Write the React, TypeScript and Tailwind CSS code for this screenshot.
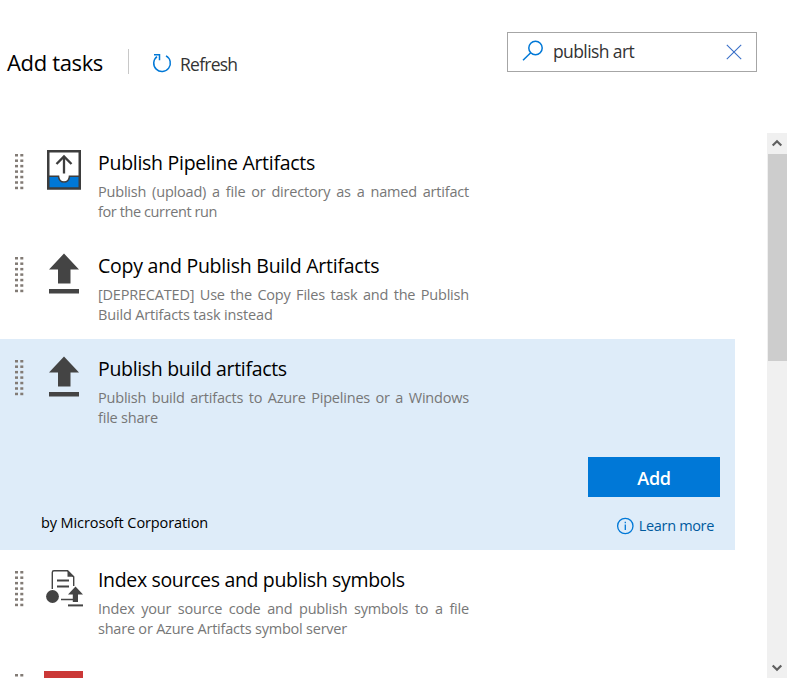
import type { ReactNode } from 'react';

function Grip({ rows = 7 }: { rows?: number }) {
  const dots = Array.from({ length: rows }, (_, i) => i * 5.45);
  return (
    <svg width="9" height="36" viewBox="0 0 9 36" fill="#827b75" className="ml-[15px] mt-[21px] shrink-0">
      {dots.map((y) => (
        <g key={y}>
          <rect x="0" y={y} width="3" height="2.500" />
          <rect x="5.300" y={y} width="3" height="2.500" />
        </g>
      ))}
    </svg>
  );
}

function PipelineIcon() {
  return (
    <svg width="40" height="42" viewBox="0 0 40 42" fill="none">
      <rect x="5.700" y="2.700" width="30" height="36" fill="#fff" />
      <path d="M6 27.500h9.500c.6 7.500 10.400 7.500 11 0H36V39.500H6z" fill="#0078d7" />
      <path d="M6 27.300h9.500c.4 7.600 10.600 7.600 11 0H36" stroke="#3d3d3d" strokeWidth="1.600" />
      <rect x="5.250" y="2.250" width="31.500" height="37.250" stroke="#3d3d3d" strokeWidth="2.500" />
      <path d="M21 24.500V8M13.500 15l7.500-7.500 7.500 7.500" stroke="#3d3d3d" strokeWidth="2.300" />
    </svg>
  );
}

function UploadIcon() {
  return (
    <svg width="40" height="42" viewBox="0 0 40 42" fill="#444">
      <path d="M21 1.500 36 17.500h-8.500V31.500H15V17.500H6z" />
      <rect x="6" y="37" width="30" height="4.500" />
    </svg>
  );
}

function SymbolsIcon() {
  return (
    <svg width="40" height="42" viewBox="0 0 40 42" fill="none" className="relative left-px top-[3px]">
      <path d="M8.300 20V3.500Q8.300 1.800 10 1.800H23.500L29.700 8v9M17 30.500h12" stroke="#444" strokeWidth="1.400" />
      <path d="M23.500 1v6.800h7z" fill="#444" />
      <path d="M13 11.500h12M13 17.500h12" stroke="#444" strokeWidth="2" />
      <circle cx="8.500" cy="27.500" r="6.400" fill="#444" />
      <path d="m31.500 17.500 7.500 8h-5V33h-5.200v-7.500H24z" fill="#444" />
      <path d="M24 36.400h15" stroke="#444" strokeWidth="2" />
    </svg>
  );
}

type TaskProps = { icon: ReactNode; title: string; titleClass: string; lines: [string, string]; lastClass: string };

function Task({ icon, title, titleClass, lines, lastClass }: TaskProps) {
  return (
    <div className="flex h-[103px]">
      <Grip />
      <div className="ml-[19px] mt-4 w-10 shrink-0">{icon}</div>
      <div className="ml-[15px] w-[371px] pt-[15px]">
        <h2 className={`whitespace-nowrap text-[19.5px] leading-[30px] text-black ${titleClass}`}>{title}</h2>
        <div className="mt-1 text-[14.5px] leading-5 text-[#777]">
          <p className="whitespace-nowrap tracking-[-0.200px] [text-align-last:justify]">{lines[0]}</p>
          <p className={`whitespace-nowrap ${lastClass}`}>{lines[1]}</p>
        </div>
      </div>
    </div>
  );
}

export default function App() {
  return (
    <div className="flex h-[678px] w-[787px] flex-col overflow-hidden bg-white font-['Open_Sans',sans-serif] text-black">
      <header className="flex h-[133px] shrink-0 items-start">
        <h1 className="ml-[7px] mt-[46px] w-[121px] whitespace-nowrap text-[22px] leading-8 tracking-[-0.350px]">Add tasks</h1>
        <div className="mt-[49px] h-[25px] w-px bg-[#c8c8c8]" />
        <button className="ml-[23px] mt-[49px] flex h-[30px] items-center text-[17.5px] tracking-[-0.750px] text-[#333]">
          <svg width="20" height="20" viewBox="0 0 20 20" fill="none" stroke="#0078d7" strokeWidth="1.500" className="-mt-0.5 mr-2">
            <path d="M14 2.900A8.300 8.300 0 1 1 5 3.600M2 1.800h5.500v5.500" />
          </svg>
          Refresh
        </button>
        <div className="ml-auto mr-[30px] mt-8 flex h-10 w-[250px] items-center border border-[#a6a6a6] text-[17.5px] tracking-[-0.600px] text-[#333]">
          <svg width="22" height="22" viewBox="0 0 22 22" fill="none" stroke="#0078d7" strokeWidth="1.500" className="-mt-0.5 ml-3.5">
            <circle cx="13.500" cy="8" r="6.700" />
            <path d="M8.700 12.800 1 20.300" />
          </svg>
          <span className="-mt-px ml-[9px] flex-1 whitespace-nowrap">publish art</span>
          <svg width="16" height="16" viewBox="0 0 16 16" stroke="#3a70c8" strokeWidth="1.100" className="-mt-px mr-3.5">
            <path d="m.8.800 14.400 14.400M15.200.800.800 15.200" />
          </svg>
        </div>
      </header>
      <div className="flex h-[545px]">
        <main className="w-[735px] overflow-hidden">
          <Task icon={<PipelineIcon />} title="Publish Pipeline Artifacts" titleClass="tracking-[-0.280px]" lines={['Publish (upload) a file or directory as a named artifact', 'for the current run']} lastClass="tracking-[-0.400px]" />
          <Task icon={<UploadIcon />} title="Copy and Publish Build Artifacts" titleClass="tracking-[-0.240px]" lines={['[DEPRECATED] Use the Copy Files task and the Publish', 'Build Artifacts task instead']} lastClass="tracking-[-0.160px]" />
          <section className="flex h-[211px] flex-col bg-[#deecf9]">
            <Task icon={<UploadIcon />} title="Publish build artifacts" titleClass="tracking-[-0.320px]" lines={['Publish build artifacts to Azure Pipelines or a Windows', 'file share']} lastClass="tracking-[-0.200px]" />
            <button className="ml-auto mr-[15px] mt-[15px] h-10 w-[132px] shrink-0 bg-[#0078d7] pt-0.5 text-[18px] font-semibold leading-none tracking-[-0.300px] text-white">Add</button>
            <div className="mt-[13px] flex items-center justify-between pl-[41px] pr-[21px]">
              <span className="-mt-1.5 whitespace-nowrap text-[14.5px] leading-5 tracking-[-0.100px]">by Microsoft Corporation</span>
              <a className="flex items-center whitespace-nowrap text-[14.5px] leading-8 tracking-[-0.340px] text-[#005a9e]">
                <svg width="18" height="18" viewBox="0 0 18 18" fill="none" stroke="#0078d7" strokeWidth="1.300" className="-mt-px mr-[5px]">
                  <circle cx="9.300" cy="9" r="7.700" />
                  <path d="M9.300 7.500V13M9.300 4.700v1.500" />
                </svg>
                Learn more
              </a>
            </div>
          </section>
          <Task icon={<SymbolsIcon />} title="Index sources and publish symbols" titleClass="tracking-[-0.340px]" lines={['Index your source code and publish symbols to a file', 'share or Azure Artifacts symbol server']} lastClass="tracking-[-0.220px]" />
          <div className="flex h-[25px] overflow-hidden">
            <Grip />
            <div className="ml-5 mt-[18px] h-10 w-[39px] bg-[#cb3837]" />
          </div>
        </main>
        <aside className="ml-8 flex w-5 flex-col items-center bg-[#f0f0f0]">
          <svg width="20" height="21" viewBox="0 0 20 21" fill="none" stroke="#606060" strokeWidth="2.200"><path d="m5.700 12.500 4.300-4.300 4.300 4.300" /></svg>
          <div className="h-[207px] w-[19px] bg-[#cdcdcd]" />
          <svg width="20" height="21" viewBox="0 0 20 21" fill="none" stroke="#606060" strokeWidth="2.200" className="mt-auto"><path d="m5.700 8.500 4.300 4.300 4.300-4.300" /></svg>
        </aside>
      </div>
    </div>
  );
}
